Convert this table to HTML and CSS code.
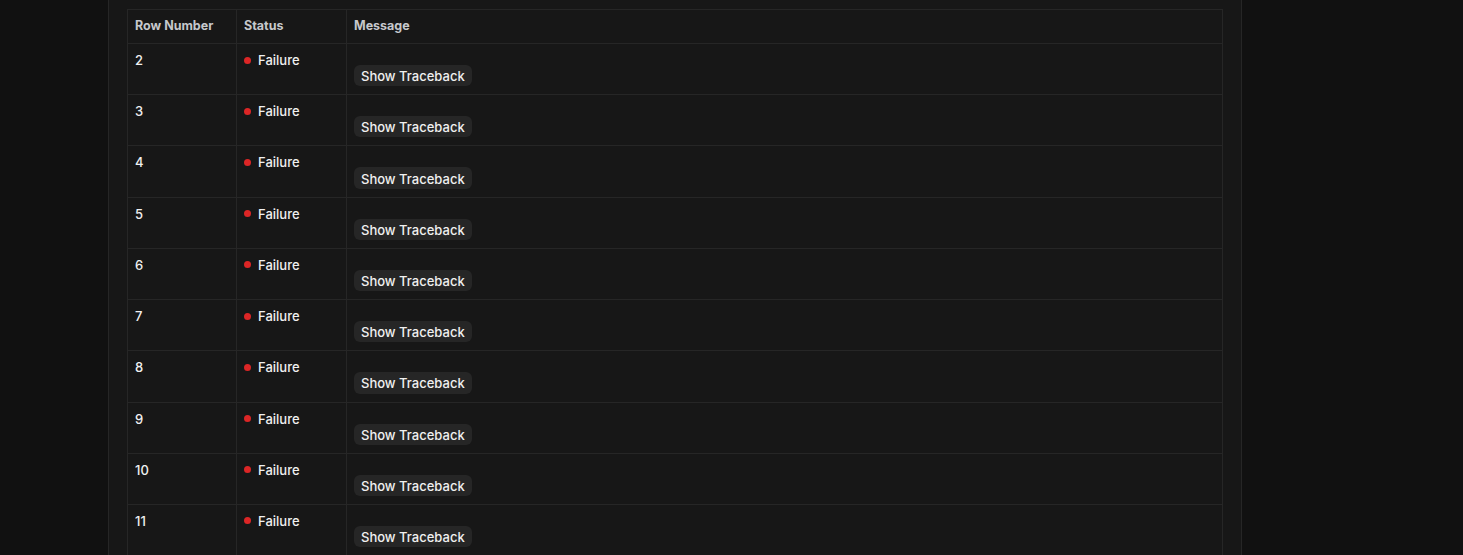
FILE: index.html
```html
<!DOCTYPE html>
<html>
<head>
<meta charset="utf-8">
<link rel="stylesheet" href="styles.css">
</head>
<body>
<div class="page">
  <div class="panel">
    <table class="results">
      <thead>
        <tr><th class="c-num">Row Number</th><th class="c-status">Status</th><th>Message</th></tr>
      </thead>
      <tbody>
        <tr><td>2</td><td><div class="status"><span class="dot"></span>Failure</div></td><td><div class="msg"><div class="spacer"></div><button class="btn">Show Traceback</button></div></td></tr>
        <tr><td>3</td><td><div class="status"><span class="dot"></span>Failure</div></td><td><div class="msg"><div class="spacer"></div><button class="btn">Show Traceback</button></div></td></tr>
        <tr><td>4</td><td><div class="status"><span class="dot"></span>Failure</div></td><td><div class="msg"><div class="spacer"></div><button class="btn">Show Traceback</button></div></td></tr>
        <tr><td>5</td><td><div class="status"><span class="dot"></span>Failure</div></td><td><div class="msg"><div class="spacer"></div><button class="btn">Show Traceback</button></div></td></tr>
        <tr><td>6</td><td><div class="status"><span class="dot"></span>Failure</div></td><td><div class="msg"><div class="spacer"></div><button class="btn">Show Traceback</button></div></td></tr>
        <tr><td>7</td><td><div class="status"><span class="dot"></span>Failure</div></td><td><div class="msg"><div class="spacer"></div><button class="btn">Show Traceback</button></div></td></tr>
        <tr><td>8</td><td><div class="status"><span class="dot"></span>Failure</div></td><td><div class="msg"><div class="spacer"></div><button class="btn">Show Traceback</button></div></td></tr>
        <tr><td>9</td><td><div class="status"><span class="dot"></span>Failure</div></td><td><div class="msg"><div class="spacer"></div><button class="btn">Show Traceback</button></div></td></tr>
        <tr><td>10</td><td><div class="status"><span class="dot"></span>Failure</div></td><td><div class="msg"><div class="spacer"></div><button class="btn">Show Traceback</button></div></td></tr>
        <tr><td>11</td><td><div class="status"><span class="dot"></span>Failure</div></td><td><div class="msg"><div class="spacer"></div><button class="btn">Show Traceback</button></div></td></tr>
      </tbody>
    </table>
  </div>
</div>
</body>
</html>
```
FILE: styles.css
```css
html, body {
  margin: 0;
  padding: 0;
  background: #111111;
  height: 100%;
  overflow: hidden;
}
body {
  font-family: Inter, "Liberation Sans", sans-serif;
  color: #f0f0f0;
}
.page {
  padding-left: 108px;
}
.panel {
  width: 1134px;
  min-height: 600px;
  background: #171717;
  border-left: 1px solid #262626;
  border-right: 1px solid #262626;
  padding: 9px 18px 0 18px;
  box-sizing: border-box;
}
.results {
  width: 1096px;
  border-collapse: collapse;
  border: 1px solid #262626;
  table-layout: fixed;
}
.results th, .results td {
  border: 1px solid #262626;
  text-align: left;
  vertical-align: top;
}
.results th {
  font-size: 12.5px;
  font-weight: 700;
  color: #c6c8cc;
  height: 32px;
  padding: 0 7px 1px 7px;
  vertical-align: middle;
  line-height: 16px;
}
.c-num { width: 94px; }
.c-status { width: 95px; }
.results td {
  font-size: 13px;
  font-weight: 500;
  line-height: 16px;
  padding: 8px 7px 8px 7px;
  height: 34.22px;
}
.status {
  display: flex;
  align-items: center;
  gap: 7px;
}
.dot {
  width: 7px;
  height: 7px;
  border-radius: 50%;
  background: #dc2626;
  flex: none;
}
.msg {
  display: flex;
  flex-direction: column;
  align-items: flex-start;
}
.spacer {
  height: 13px;
}
.btn {
  font-family: Inter, "Liberation Sans", sans-serif;
  font-size: 13px;
  font-weight: 500;
  line-height: 16px;
  color: #f0f0f0;
  background: #262626;
  border: none;
  border-radius: 6px;
  padding: 3px 7px 2px 7px;
  height: 21.22px;
  cursor: pointer;
}
```
